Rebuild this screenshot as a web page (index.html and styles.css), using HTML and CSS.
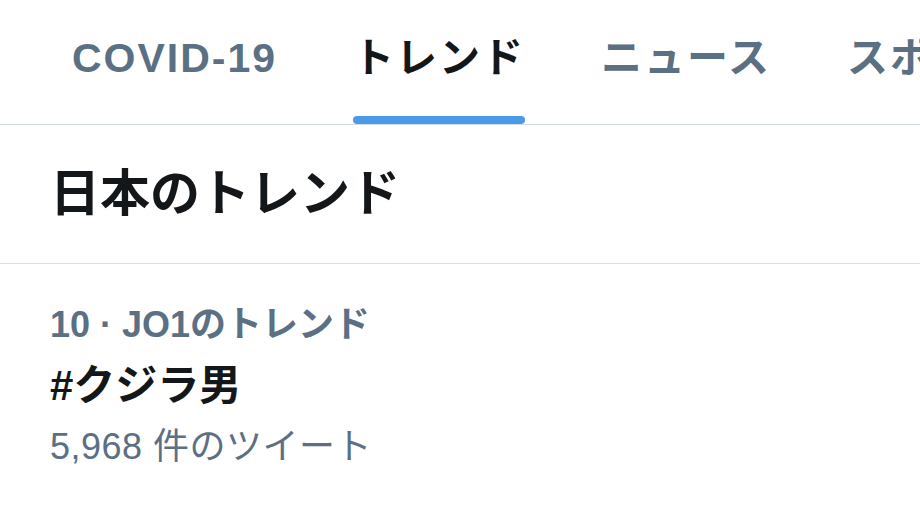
FILE: index.html
```html
<!DOCTYPE html>
<html lang="ja">
<head>
    <meta charset="UTF-8">
    <meta name="viewport" content="width=device-width, initial-scale=1.0">
    <title>トレンド</title>
    <link rel="stylesheet" href="styles.css">
</head>
<body>
    <nav class="tabs">
        <a class="tab">COVID-19</a>
        <a class="tab active">トレンド</a>
        <a class="tab">ニュース</a>
        <a class="tab">スポーツ</a>
        <a class="tab">エンターテイメント</a>
    </nav>
    <h2 class="section-title">日本のトレンド</h2>
    <div class="trend">
        <div class="trend-meta">10 · JO1のトレンド</div>
        <div class="trend-name">#クジラ男</div>
        <div class="trend-count">5,968 件のツイート</div>
    </div>
</body>
</html>
```

FILE: styles.css
```css
body {
    margin: 0;
    background: #fff;
    font-family: "Liberation Sans", "Noto Sans CJK JP", sans-serif;
    color: #14171a;
    overflow: hidden;
}
.tabs {
    display: flex;
    gap: 76px;
    height: 124px;
    padding-left: 72px;
    border-bottom: 1px solid #d3dce3;
    white-space: nowrap;
    overflow: hidden;
}
.tab {
    display: flex;
    flex-direction: column;
    padding-top: 36px;
    font-size: 41px;
    line-height: 44px;
    letter-spacing: 2px;
    font-weight: bold;
    color: #5b7083;
}
.tab.active {
    color: #14171a;
}
.tab.active::after {
    content: "";
    margin-top: auto;
    height: 8px;
    border-radius: 4px;
    background: #4a9ae9;
}
.section-title {
    margin: 0;
    height: 128px;
    padding: 0 0 10px 50px;
    display: flex;
    align-items: center;
    font-size: 50px;
    font-weight: bold;
    border-bottom: 1px solid #dcdfe2;
}
.trend {
    padding: 30px 50px 0;
}
.trend-meta, .trend-count {
    font-size: 36px;
    line-height: 61px;
    color: #5b7083;
}
.trend-meta {
    font-weight: bold;
}
.trend-count {
    letter-spacing: 0.5px;
}
.trend-name {
    font-size: 42px;
    line-height: 61px;
    font-weight: bold;
}
```
